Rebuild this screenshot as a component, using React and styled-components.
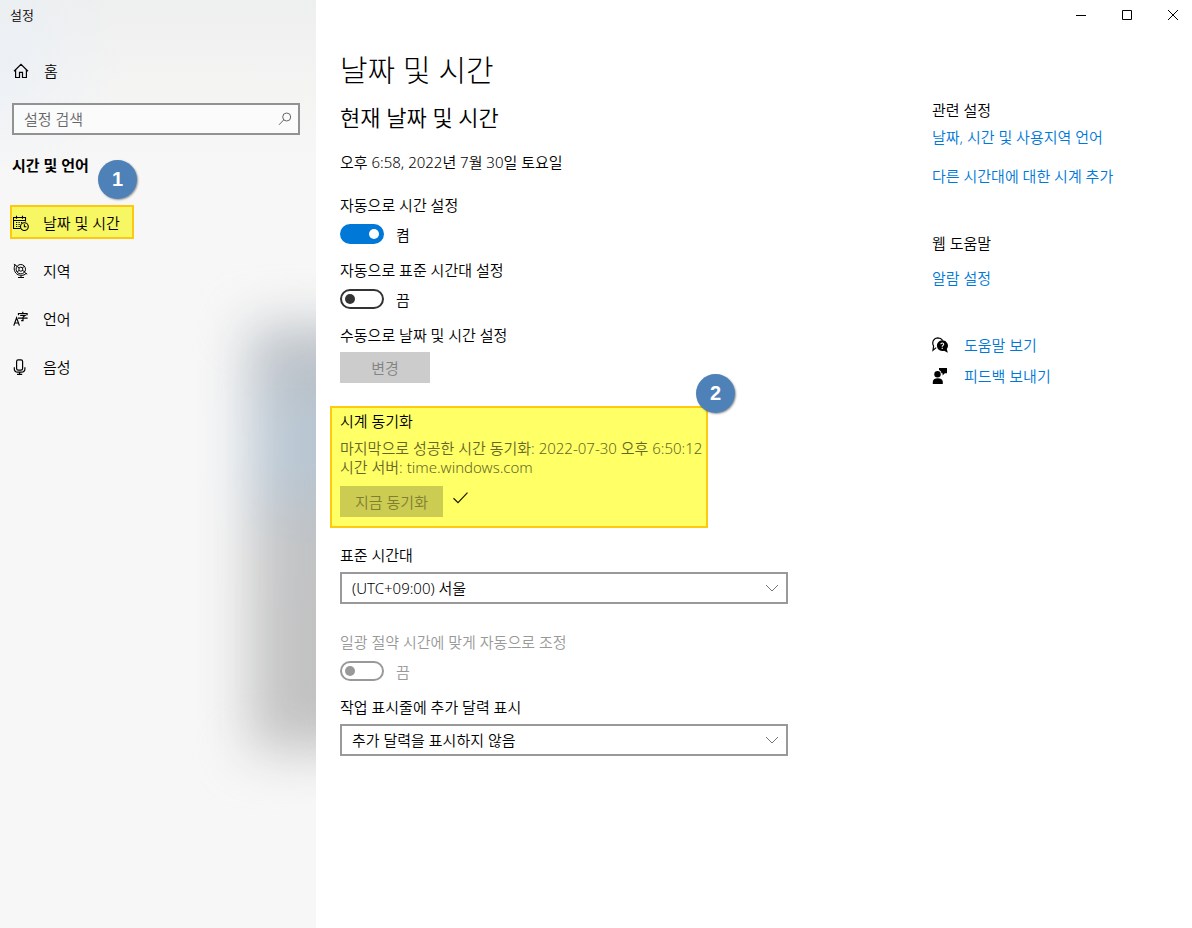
import React from 'react';
import styled, { createGlobalStyle, css } from 'styled-components';

const GlobalStyle = createGlobalStyle`
  *, *::before, *::after { box-sizing: border-box; }
  body {
    margin: 0;
    background: #fff;
    color: #000;
    font-family: "Noto Sans", "Noto Sans CJK KR", sans-serif;
    font-size: 15px;
    font-weight: 350;
    line-height: 20px;
  }
  h1, h2, h3, p, ul { margin: 0; padding: 0; font-size: 15px; font-weight: 350; }
  ul { list-style: none; }
  button, input, select { font: inherit; color: inherit; margin: 0; }
  a { text-decoration: none; }
`;

const Window = styled.div`
  display: flex;
  min-height: 100vh;
`;

const Sidebar = styled.aside`
  position: relative;
  flex: 0 0 316px;
  overflow: hidden;
  background:
    radial-gradient(ellipse 120px 120px at 0 60px, rgba(232, 239, 248, 0.6), transparent),
    linear-gradient(180deg, #eeefef 0, #f4f4f3 90px, #f7f7f7 170px);
`;

const Backdrop = styled.div`
  position: absolute;
  left: 250px;
  top: 326px;
  width: 160px;
  height: 424px;
  filter: blur(26px);
  background: linear-gradient(180deg, #bcc0c4 0, #bac2ca 50px, #b9c8d5 120px, #bac4ce 165px, #c2c3c4 215px, #c2c2c2 100%);
`;

const SidebarContent = styled.div`
  position: relative;
  padding: 0 16px 0 12px;
`;

const AppTitle = styled.div`
  height: 30px;
  margin-left: -2px;
  font-size: 13px;
  line-height: 30px;
`;

const HomeLink = styled.a`
  display: flex;
  align-items: center;
  gap: 15px;
  height: 40px;
  margin-top: 21px;
  padding-left: 1px;
  color: #000;
`;

const SearchBox = styled.label`
  display: flex;
  align-items: center;
  height: 32px;
  margin-top: 12px;
  padding: 0 6px 0 10px;
  border: 2px solid #929292;
  background: rgba(255, 255, 255, 0.6);
`;

const SearchInput = styled.input`
  flex: 1;
  min-width: 0;
  padding: 0;
  border: 0;
  outline: 0;
  background: transparent;
  &::placeholder { color: #666; opacity: 1; }
`;

const GroupTitle = styled.h2`
  margin-top: 20px;
  font-weight: 700;
`;

const NavList = styled.ul`
  display: flex;
  flex-direction: column;
  align-items: flex-start;
  gap: 14px;
  margin: 30px 0 0 -2px;
`;

const NavItem = styled.li`
  position: relative;
`;

const NavLink = styled.a`
  display: flex;
  align-items: center;
  gap: 14px;
  min-width: 124px;
  height: 34px;
  padding: 2px 10px 0 1px;
  color: #000;
  border: 2px solid transparent;
  ${p => p.$marked && css`
    border-color: #fcc810;
    background: #f7f663;
  `}
`;

const Badge = styled.span`
  position: absolute;
  left: ${p => p.$left};
  top: ${p => p.$top};
  width: 39px;
  height: 39px;
  border-radius: 50%;
  background: #4f81b9;
  box-shadow: 1px 1px 2px rgba(0, 0, 0, 0.4);
  color: #fff;
  font-family: "Liberation Sans", sans-serif;
  font-size: 20px;
  font-weight: 700;
  line-height: 38px;
  text-align: center;
`;

const Content = styled.div`
  flex: 1;
  min-width: 0;
`;

const TitleBar = styled.header`
  display: flex;
  justify-content: flex-end;
  gap: 8px;
  height: 30px;
`;

const CaptionButton = styled.button`
  display: grid;
  place-items: center;
  width: 38px;
  padding: 0;
  border: 0;
  background: transparent;
`;

const Columns = styled.div`
  display: flex;
  gap: 144px;
  padding-left: 24px;
`;

const Main = styled.main`
  flex: 0 1 448px;
  padding: 20px 0 40px;
`;

const PageTitle = styled.h1`
  font-size: 30px;
  font-weight: 300;
  line-height: 40px;
`;

const SectionTitle = styled.h2`
  margin-top: 13px;
  font-size: 22px;
  line-height: 28px;
`;

const CurrentTime = styled.p`
  margin: 21px 0 23px;
`;

const Field = styled.div`
  display: flex;
  flex-direction: column;
  align-items: flex-start;
  gap: ${p => (p.$toggle ? '9px' : '7px')};
  margin-bottom: ${p => p.$after || '12px'};
  color: ${p => (p.$disabled ? '#999' : '#000')};
`;

const ToggleRow = styled.label`
  display: flex;
  align-items: flex-start;
  gap: 12px;
  height: 24px;
  line-height: 22px;
`;

const Switch = styled.input`
  appearance: none;
  position: relative;
  width: 44px;
  height: 20px;
  border: 2px solid #333;
  border-radius: 10px;
  background: #fff;
  &::before {
    content: "";
    position: absolute;
    left: 3px;
    top: 3px;
    width: 10px;
    height: 10px;
    border-radius: 50%;
    background: #333;
  }
  &:checked { background: #0078d7; border-color: #0078d7; }
  &:checked::before { left: 27px; background: #fff; }
  &:disabled { border-color: #999; }
  &:disabled::before { background: #999; }
`;

const PushButton = styled.button`
  height: 31px;
  min-width: ${p => (p.$marked ? '103px' : '90px')};
  padding: 0 14px;
  border: 0;
  background: ${p => (p.$marked ? '#cccc52' : '#ccc')};
  color: ${p => (p.$marked ? '#7f7f33' : '#838383')};
`;

const SyncPanel = styled.section`
  position: relative;
  width: 378px;
  margin: 0 0 17px -10px;
  padding: 3px 0 9px 8px;
  border: 2px solid #ffc90e;
  background: #ffff66;
`;

const SyncInfo = styled.p`
  margin: 8px 0 9px;
  color: #666629;
  line-height: 19px;
  white-space: nowrap;
`;

const SyncAction = styled.div`
  display: flex;
  align-items: flex-start;
  gap: 10px;
`;

const SelectBox = styled.div`
  display: grid;
  align-items: center;
  align-self: stretch;
  > * { grid-area: 1 / 1; }
  > svg { justify-self: end; margin-right: 9px; pointer-events: none; }
`;

const Select = styled.select`
  appearance: none;
  width: 100%;
  height: 32px;
  padding: 0 32px 0 10px;
  border: 2px solid #999;
  border-radius: 0;
  background: #fff;
`;

const Related = styled.aside`
  flex: 1 0 200px;
  padding-top: 70px;
`;

const RelatedGroup = styled.section`
  display: flex;
  flex-direction: column;
  align-items: flex-start;
  gap: ${p => p.$gap};
  margin-bottom: 47px;
`;

const LinkList = styled.ul`
  display: flex;
  flex-direction: column;
  gap: ${p => p.$gap || '19px'};
`;

const TextLink = styled.a`
  display: flex;
  align-items: center;
  gap: 16px;
  color: #0078d7;
`;

const Line = ({ size = 16, width = 1, children, ...rest }) => (
  <svg width={size} height={size} viewBox={`0 0 ${size} ${size}`} fill="none" stroke="#000" strokeWidth={width} aria-hidden="true" {...rest}>
    {children}
  </svg>
);

const HomeIcon = () => (
  <Line width={1.2}>
    <path d="M1 8.2 8 1.4l7 6.8M2.6 7v7.5h3.9V9.4h3v5.1h3.9V7" />
  </Line>
);

const SearchIcon = () => (
  <Line size={14} stroke="#666">
    <circle cx="8.7" cy="5" r="4" />
    <path d="M5.8 7.8 1 12.8" />
  </Line>
);

const CalendarClockIcon = () => (
  <Line width={1.1}>
    <path d="M7.5 13.5h-7v-11h12v4M.5 5.5h12M3.5.8v3M9.5.8v3" />
    <path d="M3 7.5h1.2M5.5 7.5h1.2M8 7.5h1.2M3 9.5h1.2M5.5 9.5h1.2M3 11.5h1.2M5.5 11.5h1.2" />
    <circle cx="11.4" cy="11.6" r="3.9" />
    <path d="M11.4 9.2v2.6h2" />
  </Line>
);

const GlobeIcon = () => (
  <Line width={1}>
    <circle cx="7.8" cy="6.2" r="4.7" />
    <circle cx="7.8" cy="6.2" r="2" />
    <path d="M4 3.4 6.300 5M4.200 8.800 6.200 7.400M9.300 4.900 11.400 3.400M9.300 7.400 11.800 8.800" />
    <path d="M2.200 1.600c-2 3.600-1 8.400 3 10.200 3.200 1.400 6.600.4 8.400-1.800M.8 1.200 4 3.200M11.400 9.200l2.800 2M8 12.600v2M5 14.500h6" />
  </Line>
);

const LanguageIcon = () => (
  <Line width={1.2}>
    <path d="M.8 14.6 3.6 6.800l2.800 7.800M1.800 12h3.600" />
    <path d="M9.800.8v1.600M5.500 4.200V2.500h8.600v1.700M7.200 4.400h5L10 6M5 7.200h9.600M10 6v3.600H8.200" />
  </Line>
);

const MicIcon = () => (
  <Line width={1.2}>
    <rect x="3.600" y=".8" width="6" height="10.4" rx="1.6" />
    <path d="M1.300 8.200v1.600c0 2.200 1.400 3.400 3.400 3.400h3.800c2 0 3.400-1.200 3.400-3.400V8.200M6.600 13.200v2.200M4 15.400h5.200" />
  </Line>
);

const Chevron = () => (
  <svg width="14" height="8" viewBox="0 0 14 8" fill="none" stroke="#777" aria-hidden="true">
    <path d="M1 1l6 6 6-6" />
  </svg>
);

const CheckIcon = () => (
  <svg width="15" height="23" viewBox="0 0 15 23" fill="none" stroke="#1a1a00" strokeWidth="1.2" aria-hidden="true">
    <path d="M.5 12.2 5 16.6 14.5 6.6" />
  </svg>
);

const HelpIcon = () => (
  <svg width="16" height="16" viewBox="0 0 16 16" aria-hidden="true">
    <path d="M4.2 10.6 1 13.2l.6-4.1C-.6 4.8 2 .9 5.8.8c2.2 0 3.8.9 4.8 2.5" fill="none" stroke="#000" strokeWidth="1.2" />
    <path d="M10.2 3.3a5.4 5.4 0 1 0 1.9 10.5l3.7 1.9-1-3.7a5.4 5.4 0 0 0-4.6-8.7z" fill="#000" />
    <path d="M8.8 7.2c.1-1.7 3-1.6 2.9.1 0 1.1-1.5 1.2-1.5 2.5M10.2 10.8v1.2" fill="none" stroke="#fff" strokeWidth="1.1" />
  </svg>
);

const FeedbackIcon = () => (
  <svg width="16" height="16" viewBox="0 0 16 16" aria-hidden="true">
    <circle cx="5.5" cy="6.2" r="3.2" />
    <path d="M.8 16v-2.2c0-4.6 10-4.6 10 0V16zM7 0h8v5.2h-2.2L10.6 7.600V5.200H9.400C9.200 3.600 8.400 2.600 7 2z" />
  </svg>
);

const navItems = [
  { label: '날짜 및 시간', Icon: CalendarClockIcon, step: '1' },
  { label: '지역', Icon: GlobeIcon },
  { label: '언어', Icon: LanguageIcon },
  { label: '음성', Icon: MicIcon },
];

const Toggle = ({ label, state, after, ...input }) => (
  <Field $toggle $disabled={input.disabled} $after={after}>
    <span>{label}</span>
    <ToggleRow>
      <Switch type="checkbox" role="switch" aria-label={label} {...input} />
      {state}
    </ToggleRow>
  </Field>
);

const Dropdown = ({ id, label, value, after }) => (
  <Field $after={after}>
    <label htmlFor={id}>{label}</label>
    <SelectBox>
      <Select id={id}>
        <option>{value}</option>
      </Select>
      <Chevron />
    </SelectBox>
  </Field>
);

export default function App() {
  return (
    <>
      <GlobalStyle />
      <Window>
        <Sidebar>
          <Backdrop />
          <SidebarContent>
            <AppTitle>설정</AppTitle>
            <HomeLink href="#home"><HomeIcon />홈</HomeLink>
            <SearchBox>
              <SearchInput type="text" placeholder="설정 검색" aria-label="설정 검색" />
              <SearchIcon />
            </SearchBox>
            <GroupTitle>시간 및 언어</GroupTitle>
            <nav>
              <NavList>
                {navItems.map(({ label, Icon, step }) => (
                  <NavItem key={label}>
                    <NavLink href="#settings" $marked={Boolean(step)}><Icon />{label}</NavLink>
                    {step && <Badge $left="88px" $top="-45px">{step}</Badge>}
                  </NavItem>
                ))}
              </NavList>
            </nav>
          </SidebarContent>
        </Sidebar>
        <Content>
          <TitleBar>
            <CaptionButton aria-label="최소화"><Line size={10}><path d="M0 5.5h10" /></Line></CaptionButton>
            <CaptionButton aria-label="최대화"><Line size={10}><path d="M.5.5h9v9h-9z" /></Line></CaptionButton>
            <CaptionButton aria-label="닫기"><Line size={10}><path d="M0 0l10 10M10 0L0 10" /></Line></CaptionButton>
          </TitleBar>
          <Columns>
            <Main>
              <PageTitle>날짜 및 시간</PageTitle>
              <SectionTitle>현재 날짜 및 시간</SectionTitle>
              <CurrentTime>오후 6:58, 2022년 7월 30일 토요일</CurrentTime>
              <Toggle label="자동으로 시간 설정" state="켬" defaultChecked />
              <Toggle label="자동으로 표준 시간대 설정" state="끔" />
              <Field $after="23px">
                <span>수동으로 날짜 및 시간 설정</span>
                <PushButton disabled>변경</PushButton>
              </Field>
              <SyncPanel>
                <h3>시계 동기화</h3>
                <SyncInfo>
                  마지막으로 성공한 시간 동기화: 2022-07-30 오후 6:50:12<br />
                  시간 서버: time.windows.com
                </SyncInfo>
                <SyncAction>
                  <PushButton disabled $marked>지금 동기화</PushButton>
                  <CheckIcon />
                </SyncAction>
                <Badge $left="364px" $top="-34px">2</Badge>
              </SyncPanel>
              <Dropdown id="timezone" label="표준 시간대" value="(UTC+09:00) 서울" after="28px" />
              <Toggle label="일광 절약 시간에 맞게 자동으로 조정" state="끔" disabled />
              <Dropdown id="calendar" label="작업 표시줄에 추가 달력 표시" value="추가 달력을 표시하지 않음" />
            </Main>
            <Related>
              <RelatedGroup $gap="7px">
                <h3>관련 설정</h3>
                <LinkList>
                  <li><TextLink href="#region">날짜, 시간 및 사용지역 언어</TextLink></li>
                  <li><TextLink href="#clocks">다른 시간대에 대한 시계 추가</TextLink></li>
                </LinkList>
              </RelatedGroup>
              <RelatedGroup $gap="15px">
                <h3>웹 도움말</h3>
                <TextLink href="#alarm">알람 설정</TextLink>
              </RelatedGroup>
              <LinkList $gap="11px">
                <li><TextLink href="#help"><HelpIcon />도움말 보기</TextLink></li>
                <li><TextLink href="#feedback"><FeedbackIcon />피드백 보내기</TextLink></li>
              </LinkList>
            </Related>
          </Columns>
        </Content>
      </Window>
    </>
  );
}
